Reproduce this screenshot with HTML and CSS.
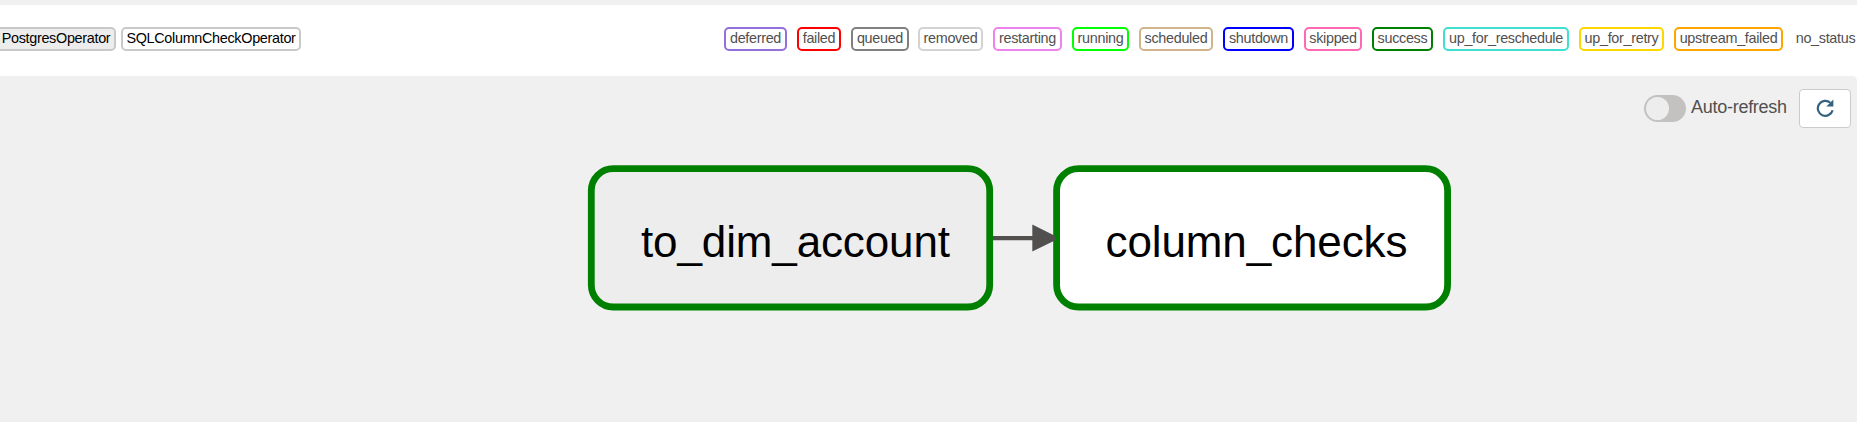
FILE: index.html
```html
<!DOCTYPE html>
<html lang="en">
<head>
<meta charset="utf-8">
<title>Graph</title>
<link rel="stylesheet" href="styles.css">
</head>
<body>
<div class="page">
  <div class="divider"></div>
  <div class="legend">
    <div class="operators">
      <span class="tag operator postgres">PostgresOperator</span>
      <span class="tag operator sqlcheck">SQLColumnCheckOperator</span>
    </div>
    <div class="states">
      <span class="tag deferred">deferred</span>
      <span class="tag failed">failed</span>
      <span class="tag queued">queued</span>
      <span class="tag removed">removed</span>
      <span class="tag restarting">restarting</span>
      <span class="tag running">running</span>
      <span class="tag scheduled">scheduled</span>
      <span class="tag shutdown">shutdown</span>
      <span class="tag skipped">skipped</span>
      <span class="tag success">success</span>
      <span class="tag reschedule">up_for_reschedule</span>
      <span class="tag retry">up_for_retry</span>
      <span class="tag upstream">upstream_failed</span>
      <span class="tag no-status">no_status</span>
    </div>
  </div>
  <div class="graph">
    <div class="controls">
      <span class="switch"><span class="knob"></span></span>
      <span class="switch-label">Auto-refresh</span>
      <button class="refresh" aria-label="Refresh">
        <svg width="18" height="18" viewBox="0 0 18 18"><path d="M14.3 3.7A7.5 7.5 0 1 0 16.6 11.2" fill="none" stroke="#35617f" stroke-width="2.2"/><path d="M17.4.6V7.6H10.4Z" fill="#35617f"/></svg>
      </button>
    </div>
    <svg class="dag" width="866" height="150" viewBox="587 163 866 150">
      <rect class="node shaded" x="591.3" y="168.6" width="398.4" height="138.4" rx="22"/>
      <rect class="node" x="1056.6" y="168.6" width="391" height="138.4" rx="22"/>
      <path class="edge" d="M993 238.1H1034"/>
      <path class="arrow" d="M1032.3 224.6L1055.3 236V240.2L1032.3 251.6Z"/>
      <text class="name" x="641" y="256.8" textLength="309">to_dim_account</text>
      <text class="name" x="1105.5" y="256.8" textLength="302">column_checks</text>
    </svg>
  </div>
</div>
</body>
</html>
```
FILE: styles.css
```css
body {
  margin: 0;
  background: #fff;
  color: #51504f;
  font-family: "Liberation Sans", Arial, sans-serif;
  overflow: hidden;
}
.page {
  width: 1857px;
  height: 422px;
  display: flex;
  flex-direction: column;
}
.divider { height: 5px; background: #f0f0f0; }
.legend {
  height: 49px;
  padding-top: 22px;
  display: flex;
  justify-content: space-between;
  align-items: flex-start;
}
.operators { display: flex; gap: 5px; margin-left: -4px; }
.states { display: flex; gap: 10px; margin-right: -2px; }
.tag {
  box-sizing: border-box;
  height: 24px;
  border: 2px solid #fff;
  border-radius: 5px;
  font-size: 14.4px;
  letter-spacing: -0.31px;
  line-height: 19px;
  text-align: center;
  white-space: nowrap;
  display: flex;
  justify-content: center;
}
.operator { border-color: #c9c9c9; color: #000; }
.postgres { width: 120px; background: #ededed; }
.sqlcheck { width: 180px; }
.deferred { width: 63px; border-color: mediumpurple; }
.failed { width: 44px; border-color: red; }
.queued { width: 58px; border-color: gray; }
.removed { width: 65px; border-color: lightgrey; margin-left: -1px; }
.restarting { width: 69px; border-color: violet; }
.running { width: 57px; border-color: lime; }
.scheduled { width: 74px; border-color: tan; }
.shutdown { width: 71px; border-color: blue; }
.skipped { width: 58px; border-color: hotpink; }
.success { width: 61px; border-color: green; }
.reschedule { width: 126px; border-color: turquoise; }
.retry { width: 85px; border-color: gold; }
.upstream { width: 109px; border-color: orange; }
.no-status { width: 67px; margin-left: -1px; }
.graph {
  flex: 1;
  background: #f0f0f0;
  border-top-right-radius: 5px;
  display: flex;
  flex-direction: column;
}
.controls {
  height: 39px;
  padding: 13px 6px 0 0;
  display: flex;
  justify-content: flex-end;
}
.switch {
  box-sizing: border-box;
  width: 42px;
  height: 27px;
  margin: 6px 5px 0 0;
  padding: 2px;
  border-radius: 14px;
  background: #c4c2c1;
}
.knob {
  display: block;
  width: 23px;
  height: 23px;
  border-radius: 50%;
  background: #ededed;
}
.switch-label {
  width: 96px;
  margin-right: 12px;
  font-size: 18px;
  letter-spacing: -0.27px;
  line-height: 36px;
  white-space: nowrap;
}
.refresh {
  box-sizing: border-box;
  width: 52px;
  height: 39px;
  padding: 0 0 2px;
  border: 1px solid #cbcbcb;
  border-radius: 4px;
  background: #fff;
  display: flex;
  align-items: center;
  justify-content: center;
}
.dag { margin: 35px 0 0 587px; }
.node { fill: #fff; stroke: green; stroke-width: 6.8px; }
.shaded { fill: #ededed; }
.edge { fill: none; stroke: #51504f; stroke-width: 4.3px; }
.arrow { fill: #51504f; }
.name { fill: #000; font-size: 44px; }
```
